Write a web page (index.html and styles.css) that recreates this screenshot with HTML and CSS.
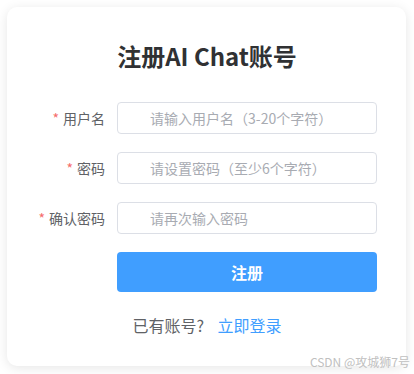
FILE: index.html
```html
<!DOCTYPE html>
<html lang="zh-CN">
<head>
  <meta charset="UTF-8" />
  <meta name="viewport" content="width=device-width, initial-scale=1.0"/>
  <title>注册AI Chat账号</title>
  <link rel="stylesheet" href="styles.css">
</head>
<body>
  <div class="card">
    <h1 class="title">注册AI Chat账号</h1>
    <form class="reg-form" autocomplete="off">
      <div class="form-row">
        <label class="form-label" for="username"><span class="req">*</span>用户名</label>
        <input class="form-input" id="username" type="text" placeholder="请输入用户名（3-20个字符）" />
      </div>
      <div class="form-row">
        <label class="form-label" for="password"><span class="req">*</span>密码</label>
        <input class="form-input" id="password" type="password" placeholder="请设置密码（至少6个字符）" />
      </div>
      <div class="form-row">
        <label class="form-label" for="confirm"><span class="req">*</span>确认密码</label>
        <input class="form-input" id="confirm" type="password" placeholder="请再次输入密码" />
      </div>
      <div class="form-row">
        <span class="form-label"></span>
        <button type="submit" class="btn-submit">注册</button>
      </div>
    </form>
    <div class="footer">已有账号? <a href="#" class="login-link">立即登录</a></div>
  </div>
  <div class="watermark">CSDN @攻城狮7号</div>
</body>
</html>
```

FILE: styles.css
```css
body {
  margin: 0;
  padding: 7px;
  background: #fff;
  font-family: "Noto Sans CJK SC", "Noto Sans", sans-serif;
  color: #303133;
  position: relative;
  min-height: 360px;
}
.card {
  width: 399px;
  height: 359px;
  box-sizing: border-box;
  background: #fff;
  border-radius: 10px;
  box-shadow: 0 2px 12px rgba(0,0,0,0.1);
  padding: 32px 29px 0 30px;
}
.title {
  margin: 0 0 30px 0;
  text-align: center;
  font-size: 24px;
  line-height: 33px;
  font-weight: 700;
  color: #303133;
}
.reg-form {
  display: flex;
  flex-direction: column;
  gap: 18px;
}
.form-row {
  display: flex;
  align-items: center;
}
.form-label {
  width: 80px;
  flex: none;
  box-sizing: border-box;
  padding-right: 12px;
  text-align: right;
  font-size: 14px;
  color: #606266;
}
.req {
  color: #f56c6c;
  margin-right: 4px;
}
.form-input {
  flex: 1;
  height: 32px;
  box-sizing: border-box;
  border: 1px solid #dcdfe6;
  border-radius: 4px;
  padding: 0 10px 0 32px;
  font-family: inherit;
  font-size: 14px;
  color: #606266;
  outline: none;
}
.form-input::placeholder {
  color: #a8abb2;
}
.btn-submit {
  flex: 1;
  height: 40px;
  border: none;
  border-radius: 4px;
  background: #409eff;
  color: #fff;
  font-family: inherit;
  font-size: 16px;
  font-weight: 700;
  cursor: pointer;
}
.footer {
  margin-top: 21px;
  text-align: center;
  font-size: 16px;
  line-height: 24px;
  color: #606266;
}
.login-link {
  color: #409eff;
  text-decoration: none;
  margin-left: 10px;
}
.watermark {
  position: absolute;
  right: 4px;
  bottom: 4px;
  font-size: 12px;
  color: #c0c0c0;
}
```
